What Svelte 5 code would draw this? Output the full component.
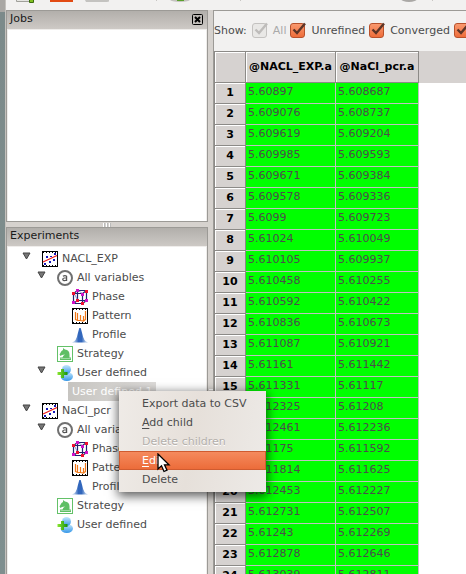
<script>
  let tree = $state([
    { depth: 0, icon: 'plot', label: 'NACL_EXP', open: true },
    { depth: 1, icon: 'vars', label: 'All variables', open: true },
    { depth: 2, icon: 'phase', label: 'Phase' },
    { depth: 2, icon: 'pattern', label: 'Pattern' },
    { depth: 2, icon: 'profile', label: 'Profile' },
    { depth: 1, icon: 'strategy', label: 'Strategy' },
    { depth: 1, icon: 'user', label: 'User defined', open: true },
    { depth: 2, label: 'User defined 1', selected: true },
    { depth: 0, icon: 'plot', label: 'NaCl_pcr', open: true },
    { depth: 1, icon: 'vars', label: 'All variables', open: true },
    { depth: 2, icon: 'phase', label: 'Phase' },
    { depth: 2, icon: 'pattern', label: 'Pattern' },
    { depth: 2, icon: 'profile', label: 'Profile' },
    { depth: 1, icon: 'strategy', label: 'Strategy' },
    { depth: 1, icon: 'user', label: 'User defined' }
  ]);

  const rows = [
    ['5.60897', '5.608687'], ['5.609076', '5.608737'], ['5.609619', '5.609204'],
    ['5.609985', '5.609593'], ['5.609671', '5.609384'], ['5.609578', '5.609336'],
    ['5.6099', '5.609723'], ['5.61024', '5.610049'], ['5.610105', '5.609937'],
    ['5.610458', '5.610255'], ['5.610592', '5.610422'], ['5.610836', '5.610673'],
    ['5.611087', '5.610921'], ['5.61161', '5.611442'], ['5.611331', '5.61117'],
    ['5.612325', '5.61208'], ['5.612461', '5.612236'], ['5.61175', '5.611592'],
    ['5.611814', '5.611625'], ['5.612453', '5.612227'], ['5.612731', '5.612507'],
    ['5.61243', '5.612269'], ['5.612878', '5.612646'], ['5.613039', '5.612811']
  ];

  const filters = [
    { label: 'All', disabled: true },
    { label: 'Unrefined' },
    { label: 'Converged' },
    { label: '' }
  ];
</script>

{#snippet icon(name)}
  <svg class="icon" width="16" height="16" viewBox="0 0 16 16" aria-hidden="true">
    {#if name === 'plot'}
      <rect x=".5" y=".5" width="15" height="15" fill="#fff" stroke="#000" />
      <path d="M1 1.5h14M1 14.5h14" stroke="#000" stroke-dasharray="1 2" />
      <path d="M1 11 15 4.5" stroke="#f01818" stroke-width="1.2" />
      <path d="M4 5h2v2H4zM7 10h2v2H7zM12 2h2v2h-2zM2 12h2v2H2zM8 5h2v1H8zM11 8h2v2h-2z" fill="#1515b8" />
    {:else if name === 'vars'}
      <circle cx="8" cy="8" r="7" fill="#fff" stroke="#707070" stroke-width="2" />
      <path d="M5.9 6.3Q8 5 9.600 6.200V11M9.600 8H7.200Q5.600 8.200 5.700 9.600 6.800 11.700 9.600 9.700" fill="none" stroke="#555" stroke-width="1.200" />
    {:else if name === 'phase'}
      <path d="M1.500 4.500h9v10h-9zM5.500 1.500h9v10h-9zM1.500 4.500l4-3M10.500 4.500l4-3M1.500 14.500l4-3M10.500 14.500l4-3" fill="none" stroke="#22226e" stroke-width="1.200" />
      <path d="M2.500 5l3 6M7 2l4 3" stroke="#9090c8" />
      <path d="M0 3h3v3H0zM13 1h3v3h-3zM4 10h3v3H4zM9 13h3v3H9z" fill="#f01030" />
      <path d="M4 0h3v3H4zM9 4h3v3H9zM0 12h3v3H0zM13 10h3v3h-3z" fill="#d010c8" />
    {:else if name === 'pattern'}
      <rect x=".5" y=".5" width="15" height="15" fill="#fff" stroke="#000" />
      <path d="M1 1.500h14M1 14.500h14" stroke="#000" stroke-dasharray="1 2" />
      <path d="M3.500 4v8M5.500 5v8M8.500 7v6M11.500 8v5M13.500 3v9M3.500 11.500l2 1 3 0 3 .500 2-1.500" fill="none" stroke="#f07818" stroke-width="1.200" />
    {:else if name === 'profile'}
      <defs><linearGradient id="peak"><stop offset=".15" stop-color="#a9c3e6" /><stop offset=".4" stop-color="#3267bc" /><stop offset=".6" stop-color="#3267bc" /><stop offset=".85" stop-color="#a9c3e6" /></linearGradient></defs>
      <path d="M0 15.500Q4.500 14 5.500 7.500L7.300 1h1.400L10.500 7.500Q11.500 14 16 15.500z" fill="url(#peak)" />
    {:else if name === 'strategy'}
      <rect x=".5" y=".5" width="15" height="15" fill="#fff" stroke="#63c168" />
      <path d="M3 14v-2.500h2.500Q6 9.500 8 8.500L5 9 3.500 10 2.500 8.500 4.500 5 6 4V2L8 3.500Q12.500 4 12.500 8.500V11.500H14V14z" fill="#5fbf65" />
      <path d="M3.500 12.500h10" stroke="#c8eccb" stroke-width=".6" />
    {:else if name === 'user'}
      <defs>
        <linearGradient id="person" x2="0" y2="1"><stop stop-color="#c4e8fc" /><stop offset="1" stop-color="#3597e8" /></linearGradient>
        <linearGradient id="plus"><stop stop-color="#8be830" /><stop offset="1" stop-color="#159010" /></linearGradient>
      </defs>
      <ellipse cx="9.800" cy="11.500" rx="6.200" ry="4.500" fill="url(#person)" />
      <circle cx="9.500" cy="4.500" r="4.500" fill="url(#person)" />
      <path d="M4 4h3v3h3.500v3H7v3H4v-3H.5V7H4z" fill="url(#plus)" />
    {/if}
  </svg>
{/snippet}

<div class="desktop">
  <div class="window">
    <header class="toolbar">
      <svg width="460" height="10" viewBox="6 0 460 10" aria-hidden="true">
        <path d="M16.500 0v1.500h16V0" fill="#e6e6e2" stroke="#a0a09a" />
        <path d="M29.500 0v2.500h4V0" fill="#80c020" stroke="#3c6c10" />
        <path d="M50 0h23v2H50z" fill="#e24a12" />
        <path d="M85 0h24v1.500l-2 .5H86z" fill="#c4c3c0" />
        <path d="M156.500 0v1M240.500 0v1M432.500 0v1" stroke="#c8c6c3" />
        <ellipse cx="180" cy="-.500" rx="10" ry="2.500" fill="#c4c2bf" />
        <path d="M177 0h7v1h-7z" fill="#5aa02c" />
        <ellipse cx="409" cy="-1" rx="8" ry="3" fill="#aaa8a5" />
      </svg>
    </header>
    <main class="body">
      <aside class="side">
        <section class="dock jobs">
          <h2>Jobs
            <button class="close" aria-label="Close Jobs">
              <svg width="11" height="11" viewBox="0 0 11 11"><rect x=".5" y=".5" width="10" height="10" rx="1" fill="none" stroke="#000" /><path d="M3 3l5 5M8 3L3 8" stroke="#000" stroke-width="2" /></svg>
            </button>
          </h2>
          <div class="pane"></div>
        </section>
        <div class="grip" role="separator"><i></i><i></i><i></i></div>
        <section class="dock experiments">
          <h2>Experiments</h2>
          <ul class="pane tree" role="tree">
            {#each tree as node}
              <li role="treeitem" aria-selected={!!node.selected} style="padding-left: {node.depth * 15}px">
                <span class="twist">
                  {#if node.open}
                    <button aria-label="Collapse {node.label}">
                      <svg width="9" height="8" viewBox="0 0 9 8"><path d="M1 1h7L4.500 7z" fill="#777" stroke="#444" /></svg>
                    </button>
                  {/if}
                </span>
                {#if node.icon}{@render icon(node.icon)}{/if}
                <span class="name" class:selected={node.selected}>{node.label}</span>
              </li>
            {/each}
          </ul>
        </section>
      </aside>
      <div class="vsplit" role="separator"><i></i><i></i><i></i></div>
      <section class="content">
        <div class="filters">
          <span class="show">Show:</span>
          {#each filters as f}
            <label class:off={f.disabled}>
              <span class="box">
                <input type="checkbox" checked disabled={f.disabled} />
                <svg width="17" height="16" viewBox="0 0 17 16" aria-hidden="true"><path d="M3.500 7.500 7 11 15 1.500" fill="none" stroke-width="2.4" /></svg>
              </span>
              {f.label}
            </label>
          {/each}
        </div>
        <div class="grid">
          <table>
            <thead>
              <tr><th class="num"></th><th class="c1">@NACL_EXP.a</th><th class="c2">@NaCl_pcr.a</th></tr>
            </thead>
            <tbody>
              {#each rows as row, i}
                <tr><th class="num">{i + 1}</th><td>{row[0]}</td><td>{row[1]}</td></tr>
              {/each}
            </tbody>
          </table>
        </div>
      </section>
    </main>
  </div>

  <div class="menu" role="menu">
    <button role="menuitem">Export data to CSV</button>
    <button role="menuitem"><u>A</u>dd child</button>
    <button role="menuitem" disabled>Delete children</button>
    <button role="menuitem" class="active"><u>E</u>dit</button>
    <button role="menuitem">Delete</button>
  </div>
  <svg class="cursor" width="14" height="20" viewBox="0 0 14 20" aria-hidden="true">
    <path d="M1 1v15l3.500-3.200L7 18.500l3-1.300-2.500-5.400H12z" fill="#fff" stroke="#000" stroke-width="1.300" />
  </svg>
</div>

<style>
  :global(body) { overflow: hidden; }
  .desktop {
    position: relative;
    height: 100vh;
    padding-left: 5px;
    box-sizing: border-box;
    overflow: hidden;
    background: linear-gradient(#a9a7a4 12px, #7c8a8a 12px, #7f8f8f);
    color: #4c4c4c;
    font: 11px/19px "DejaVu Sans", sans-serif;
  }
  button { border: 0; padding: 0; background: none; font: inherit; color: inherit; }
  svg { display: block; }
  .window {
    display: flex;
    flex-direction: column;
    height: 100%;
    box-sizing: border-box;
    border-left: 1px solid #c4c1bd;
    background: #d6d2ce;
  }
  .toolbar { flex: none; height: 10px; overflow: hidden; background: #f2f1f0; }
  .body { display: flex; flex: 1; min-height: 0; }
  .side { display: flex; flex-direction: column; flex: none; width: 202px; }
  .dock {
    display: flex;
    flex-direction: column;
    box-sizing: border-box;
    border: 1px solid #9c9a96;
    background: #efedeb;
  }
  .jobs { height: 212px; }
  .experiments { flex: 1; min-height: 0; border-bottom: 0; }
  h2 {
    display: flex;
    justify-content: space-between;
    align-items: center;
    box-sizing: border-box;
    flex: none;
    margin: 0;
    padding: 0 4px 2px 3px;
    height: 18px;
    background: linear-gradient(#b2afab, #cdc9c5);
    color: #1a1a1a;
    font: inherit;
    line-height: 16px;
  }
  .close { width: 11px; height: 11px; line-height: 0; }
  .pane { flex: 1; margin: 1px 1px 0; background: #fff; }
  .grip { display: flex; gap: 2px; justify-content: center; align-items: center; height: 5px; }
  .grip i { width: 1px; height: 4px; background: #fff; border-right: 1px solid #bbb; }
  .grip i + i { margin-left: -1px; }
  .vsplit { display: flex; flex-direction: column; gap: 2px; align-items: center; justify-content: center; flex: none; width: 5px; padding-top: 200px; }
  .vsplit i { width: 4px; height: 1px; background: #fff; }
  .tree { list-style: none; padding: 2px 0 0 14px; overflow: hidden; }
  li { display: flex; align-items: center; height: 19px; }
  .twist { width: 16px; }
  .twist button { display: block; width: 9px; height: 14px; }
  .twist svg { margin-bottom: 6px; }
  .icon { flex: none; margin-left: 4px; }
  .name { padding: 0 4px; line-height: 19px; white-space: nowrap; }
  .selected { background: linear-gradient(100deg, #c6c4c0, #dedcda); color: #fff; }

  .content {
    display: flex;
    flex-direction: column;
    flex: 1;
    min-width: 0;
    border: solid #9c9a96;
    border-width: 1px 0 0 1px;
    background: #f2f1f0;
  }
  .filters { display: flex; align-items: center; box-sizing: border-box; flex: none; height: 40px; padding-bottom: 1px; overflow: hidden; white-space: nowrap; }
  .show { margin-right: 5px; }
  label { display: flex; align-items: center; gap: 6px; margin-right: 4px; }
  .off { color: #aaa; }
  .box { position: relative; width: 15px; height: 15px; }
  .box input {
    display: block;
    appearance: none;
    box-sizing: border-box;
    width: 15px;
    height: 15px;
    margin: 0;
    border: 1px solid #b8512b;
    border-radius: 3px;
    background: linear-gradient(#f9996f, #ee6d3a);
  }
  .box svg { position: absolute; left: 0; top: -1px; pointer-events: none; stroke: #5c3426; }
  .off input { border-color: #c4c2c0; background: #e9e8e6; }
  .off svg { stroke: #bebcba; }
  .grid {
    flex: 1;
    min-height: 0;
    overflow: hidden;
    background: linear-gradient(#d6d2d0 32px, #fff 32px);
  }
  table { border-collapse: separate; border-spacing: 0; table-layout: fixed; width: 205px; }
  tr { height: 21px; }
  th {
    box-sizing: border-box;
    padding: 0;
    border: solid #8c8a87;
    border-width: 0 1px 1px 0;
    background: #d6d2d0;
    box-shadow: inset 1px 1px #fff;
    color: #000;
    line-height: 18px;
  }
  thead th { height: 32px; border-top-width: 1px; }
  .num { width: 32px; border-left-width: 1px; }
  .c1 { width: 90px; }
  .c2 { width: 83px; }
  td {
    box-sizing: border-box;
    height: 21px;
    padding: 0 0 2px 2px;
    border: solid #c0c0c0;
    border-width: 0 1px 1px 0;
    background: #0f0;
    line-height: 16px;
  }
  .menu {
    position: absolute;
    left: 119px;
    top: 391px;
    display: flex;
    flex-direction: column;
    box-sizing: border-box;
    width: 147px;
    padding: 3px 0;
    background: linear-gradient(100deg, #efebe7, #e6e0da 50%, #edeae7);
    box-shadow: 0 3px 10px 1px rgba(0, 0, 0, .65);
  }
  .menu button { height: 19px; padding-left: 23px; text-align: left; line-height: 19px; }
  .menu button:disabled { color: #b3afab; text-shadow: 0 1px #fff; }
  .menu u { text-underline-offset: 2px; }
  .menu .active {
    padding-left: 22px;
    border: 1px solid #cf5b30;
    background: linear-gradient(#f58a5d, #ec6c3a);
    color: #fff;
    line-height: 17px;
  }
  .cursor { position: absolute; left: 157px; top: 453px; }
</style>
